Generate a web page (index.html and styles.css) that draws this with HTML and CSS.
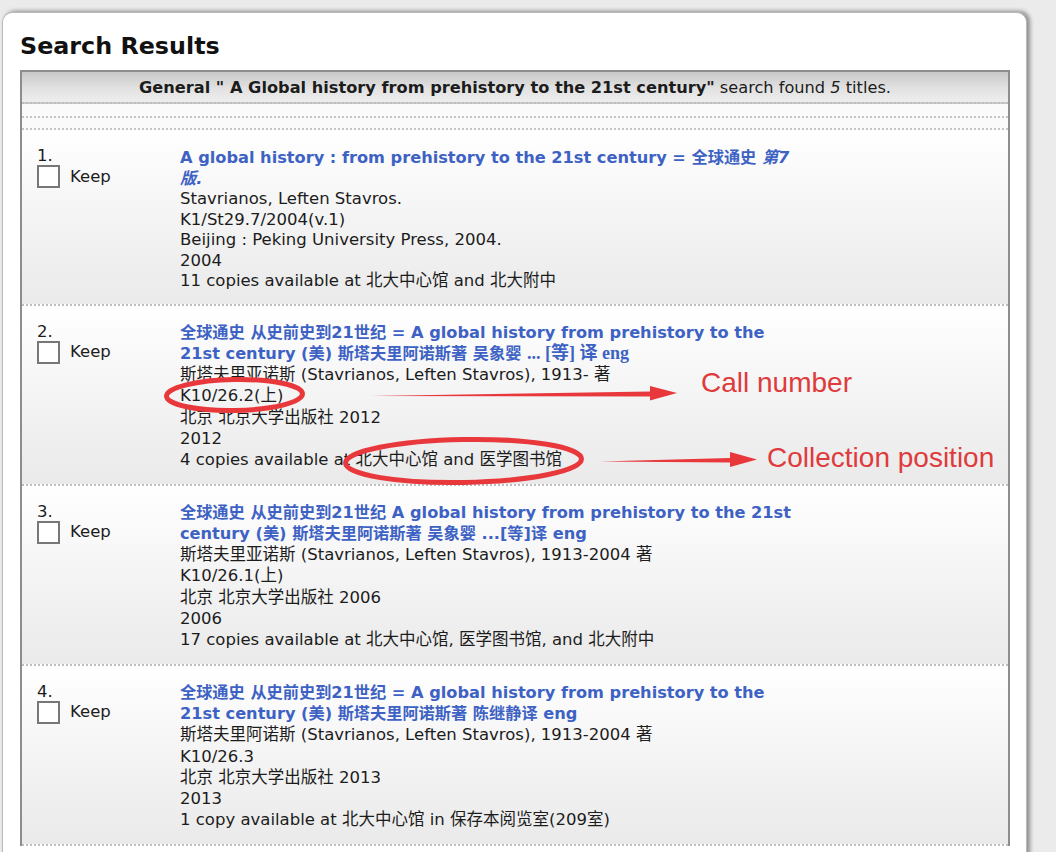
FILE: index.html
```html
<!DOCTYPE html>
<html>
<head>
<meta charset="utf-8">
<title>Search Results</title>
<link rel="stylesheet" href="styles.css">
</head>
<body>
<div class="panel">
  <h2 class="page-title">Search Results</h2>
  <div class="results">
    <div class="summary">
      <b>General " A Global history from prehistory to the 21st century"</b> search found <i>5</i> titles.
    </div>
    <div class="spacer"></div>
    <div class="spacer short"></div>

    <div class="item tight">
      <div class="select">
        <div class="num">1.</div>
        <label class="keep"><span class="box"></span>Keep</label>
      </div>
      <div class="record">
        <a class="title">A global history : from prehistory to the 21st century = 全球通史 <i>第7<br>版.</i></a>
        <div>Stavrianos, Leften Stavros.</div>
        <div>K1/St29.7/2004(v.1)</div>
        <div>Beijing : Peking University Press, 2004.</div>
        <div>2004</div>
        <div>11 copies available at 北大中心馆 and 北大附中</div>
      </div>
    </div>

    <div class="item">
      <div class="select">
        <div class="num">2.</div>
        <label class="keep"><span class="box"></span>Keep</label>
      </div>
      <div class="record">
        <a class="title">全球通史 从史前史到21世纪 = A global history from prehistory to the<br>21st century (美) 斯塔夫里阿诺斯著 吴象婴 <span class="serif">... [等] 译 eng</span></a>
        <div>斯塔夫里亚诺斯 (Stavrianos, Leften Stavros), 1913- 著</div>
        <div>K10/26.2(上)</div>
        <div>北京 北京大学出版社 2012</div>
        <div>2012</div>
        <div>4 copies available at 北大中心馆 and 医学图书馆</div>
      </div>
    </div>

    <div class="item">
      <div class="select">
        <div class="num">3.</div>
        <label class="keep"><span class="box"></span>Keep</label>
      </div>
      <div class="record">
        <a class="title">全球通史 从史前史到21世纪 A global history from prehistory to the 21st<br>century (美) 斯塔夫里阿诺斯著 吴象婴 ...[等]译 eng</a>
        <div>斯塔夫里亚诺斯 (Stavrianos, Leften Stavros), 1913-2004 著</div>
        <div>K10/26.1(上)</div>
        <div>北京 北京大学出版社 2006</div>
        <div>2006</div>
        <div>17 copies available at 北大中心馆, 医学图书馆, and 北大附中</div>
      </div>
    </div>

    <div class="item">
      <div class="select">
        <div class="num">4.</div>
        <label class="keep"><span class="box"></span>Keep</label>
      </div>
      <div class="record">
        <a class="title">全球通史 从史前史到21世纪 = A global history from prehistory to the<br>21st century (美) 斯塔夫里阿诺斯著 陈继静译 eng</a>
        <div>斯塔夫里阿诺斯 (Stavrianos, Leften Stavros), 1913-2004 著</div>
        <div>K10/26.3</div>
        <div>北京 北京大学出版社 2013</div>
        <div>2013</div>
        <div>1 copy available at 北大中心馆 in 保存本阅览室(209室)</div>
      </div>
    </div>
  </div>
</div>

<div class="annotations">
  <svg class="marks" width="1056" height="852" viewBox="0 0 1056 852">
    <ellipse cx="234.5" cy="395" rx="68" ry="15.5" fill="none" stroke="#e8383c" stroke-width="5" transform="rotate(-1 234 395)"/>
    <path d="M370 396 L650 391.5 L650 386 L677 393 L650 400.5 L650 396.5 Z" fill="#e8383c"/>
    <ellipse cx="463.5" cy="461" rx="118" ry="21.5" fill="none" stroke="#e8383c" stroke-width="5" transform="rotate(-1 463 461)"/>
    <path d="M600 461.5 L730 458 L730 452 L757 459.5 L730 467 L730 462.5 Z" fill="#e8383c"/>
  </svg>
  <span class="label label-call">Call number</span>
  <span class="label label-position">Collection position</span>
</div>
</body>
</html>
```

FILE: styles.css
```css
html, body {
  margin: 0;
  padding: 0;
}

body {
  background: #ebebeb;
  font-family: "DejaVu Sans", Verdana, "Noto Sans CJK SC", sans-serif;
  color: #1c1c1c;
  width: 1056px;
  height: 852px;
  overflow: hidden;
  position: relative;
}

.panel {
  margin: 12px 0 0 2px;
  width: 1025px;
  min-height: 860px;
  box-sizing: border-box;
  background: #ffffff;
  border: 1px solid #b9b9b9;
  border-bottom: none;
  border-radius: 10px 10px 0 0;
  box-shadow: 3px -1px 4px rgba(0, 0, 0, 0.4);
  padding: 19px 16px 0 17px;
}

.page-title {
  margin: 0 0 9px 0;
  font-size: 23.8px;
  line-height: 29px;
  font-weight: bold;
  color: #111;
}

.results {
  width: 990px;
  box-sizing: border-box;
  border: 2px solid #8d8d8d;
  border-bottom: none;
  font-size: 16.5px;
}

.summary {
  height: 30px;
  line-height: 31px;
  text-align: center;
  font-size: 16.2px;
  background: linear-gradient(#c9c9c9, #e2e2e2 55%, #ededed);
  border-bottom: 2px dotted #bdbdbd;
}

.spacer {
  height: 12px;
  background: #fafafa;
  border-bottom: 2px dotted #c4c4c4;
}

.spacer.short {
  height: 10px;
}

.item {
  display: grid;
  grid-template-columns: 143px 1fr;
  padding: 16px 0 13px 15px;
  line-height: 21.3px;
  background: linear-gradient(#ffffff, #f4f4f4 50%, #eaeaea);
  border-bottom: 2px dotted #bdbdbd;
}

.item.tight {
  line-height: 20.5px;
  padding-top: 18px;
  padding-bottom: 12px;
}

.item.tight .select {
  margin-top: -2px;
}

.select .num {
  line-height: 20px;
  margin-top: 0;
}

.keep {
  display: flex;
  align-items: center;
  gap: 10px;
  margin-top: -1px;
  line-height: 22px;
}

.box {
  width: 23px;
  height: 23px;
  box-sizing: border-box;
  border: 2px solid #777;
  background: #fff;
}

.record .title {
  display: block;
  color: #3d62c4;
  font-weight: bold;
  font-size: 16.2px;
  text-decoration: none;
  white-space: nowrap;
}

.record .serif {
  font-family: "Liberation Serif", "Noto Sans CJK SC", serif;
  font-size: 18px;
}

.annotations {
  position: absolute;
  left: 0;
  top: 0;
  width: 1056px;
  height: 852px;
  pointer-events: none;
}

.marks {
  position: absolute;
  left: 0;
  top: 0;
}

.label {
  position: absolute;
  font-family: "Liberation Sans", Arial, sans-serif;
  color: #df3a3c;
  font-size: 28px;
  line-height: 32px;
  white-space: nowrap;
}

.label-call {
  left: 701px;
  top: 367px;
}

.label-position {
  left: 767px;
  top: 442px;
}
```
